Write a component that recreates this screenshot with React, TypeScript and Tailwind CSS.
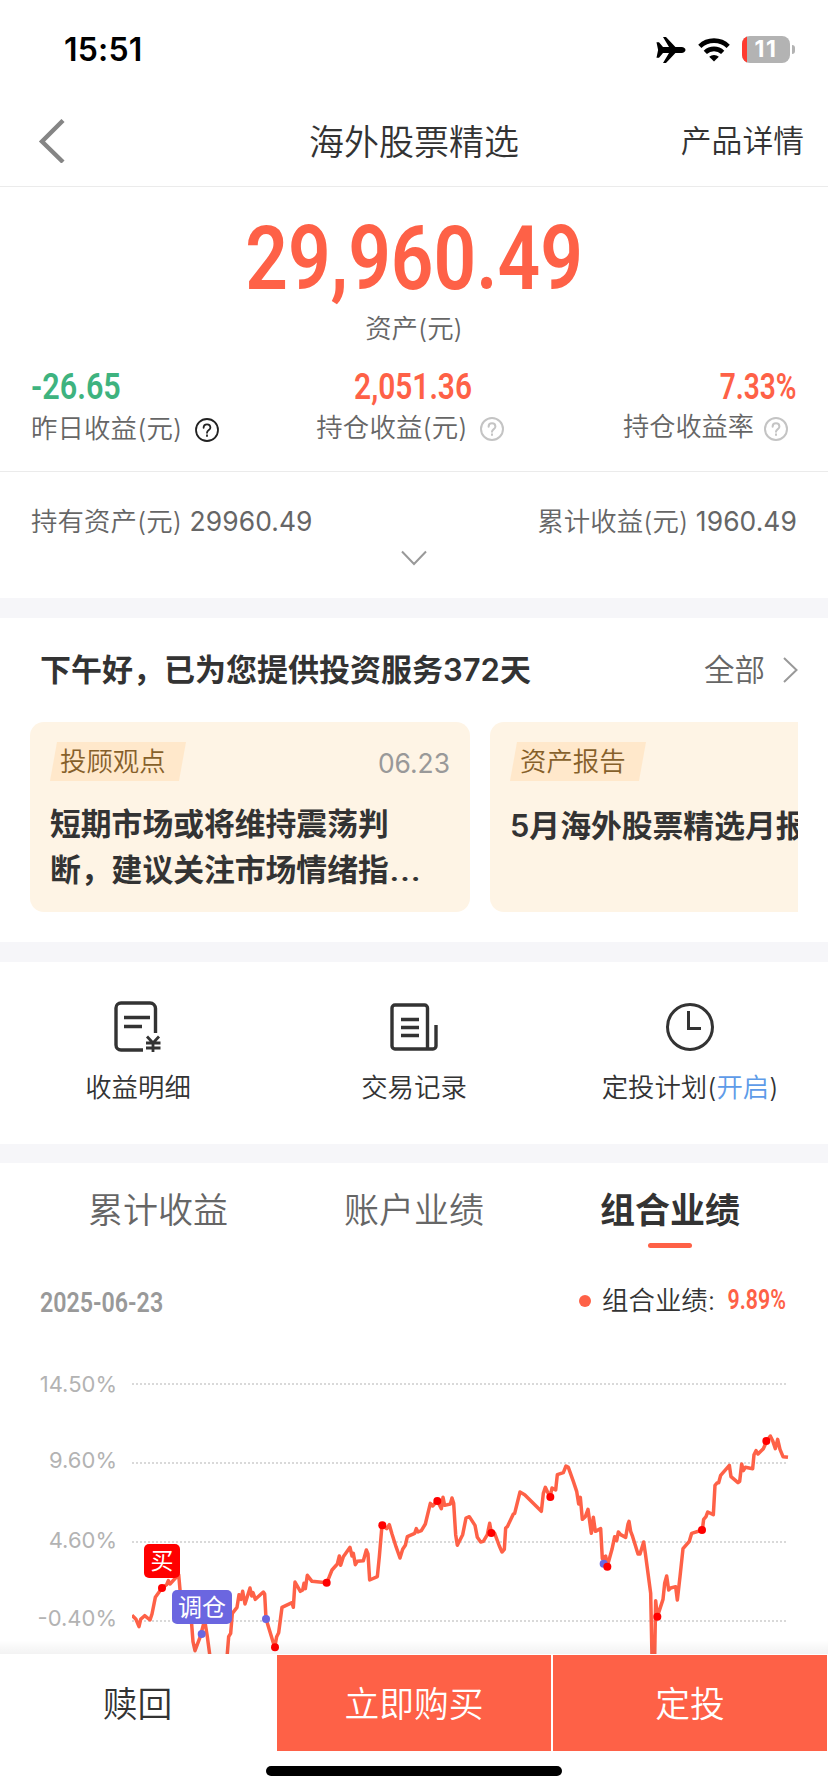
import React from 'react';

const CJK = "font-['Inter','Noto_Sans_CJK_SC',sans-serif]";
const DIN = "font-['Roboto',sans-serif] font-semibold inline-block whitespace-nowrap";

function Help({ dark = false }: { dark?: boolean }) {
  return (
    <svg width="26" height="26" viewBox="0 0 26 26" fill="none" stroke={dark ? '#222' : '#c4c4c4'} strokeWidth={dark ? 1.8 : 2}>
      <circle cx="13" cy="13" r="11" />
      <path d="M9.600 10.800c0-4.600 6.800-4.600 6.800 0 0 2.300-3.400 2.300-3.400 5" strokeLinecap="round" />
      <path d="M13 17.600v2.200" />
    </svg>
  );
}

function StatusBar() {
  return (
    <div className="flex h-[96px] items-center justify-between pt-[3px] pl-[64px] pr-[33px]">
      <span className="pt-px text-[32px] leading-none font-semibold tracking-[0.2px] text-black">15:51</span>
      <div className="flex items-center gap-[12px]">
        <svg width="30" height="28" viewBox="0 0 30 28" fill="#000">
          <path d="M0.500 6.200h2.500l4 4.900h6L7 1h3l9.400 10.100h6.200c2.200 0 3.900 1.500 3.900 2.900s-1.700 2.900-3.900 2.900h-6.200L10 27H7l6-10.100H7l-4 4.900H0.500L2.100 14z" />
        </svg>
        <svg width="32" height="25" viewBox="0 0 32 25" fill="none" stroke="#000" strokeWidth="4.600">
          <path d="M1.800 9.300a20.500 20.500 0 0 1 28.400 0" />
          <path d="M7.300 15.400a12.500 12.500 0 0 1 17.400 0" />
          <path d="M16 24.500l-4.800-4.700a7 7 0 0 1 9.600 0z" fill="#000" stroke="none" />
        </svg>
        <div className="flex items-center">
          <div className="flex h-[27px] w-[48px] items-center overflow-hidden rounded-[8px] bg-[#b3b3b3]">
            <div className="h-full w-[5px] bg-[#ff3b30]" />
            <span className="flex-1 pr-[5px] text-center text-[23px] leading-none font-bold tracking-[1.5px] text-white">11</span>
          </div>
          <div className="ml-[2px] h-[9px] w-[3px] rounded-r-full bg-[#b3b3b3]" />
        </div>
      </div>
    </div>
  );
}

function Tag({ children }: { children: React.ReactNode }) {
  return (
    <div className="flex h-[39px] w-[136px] items-center bg-[#ffe8cb] pl-[10px] text-[26.4px] leading-none text-[#86602a] [clip-path:polygon(7px_0,100%_0,calc(100%-7px)_100%,0_100%)]">
      <span>{children}</span>
    </div>
  );
}

const LINE =
  '396,1066 408,1078 417,1100 422,1078 434,1067 450,1080 456,1062 466,1012 486,984 500,974 505,962 510,972 536,944 541,1000 560,1060 574,1080 579,1145 585,1172 600,1132 614,1080 622,1130 630,1190 650,1300 672,1290 682,1180 686,1130 692,1120 697,1060 711,1042 717,1004 723,1018 728,994 735,1032 750,984 755,1008 759,998 766,1018 790,996 794,1002 798,1076 824,1162 830,1130 836,1118 846,1042 876,1028 880,1042 885,966 901,994 908,990 912,970 916,986 922,946 936,964 980,968 988,950 996,930 1012,912 1018,888 1022,916 1030,890 1050,862 1056,888 1060,880 1066,914 1072,904 1090,902 1099,870 1104,882 1109,960 1132,950 1138,890 1146,796 1160,806 1168,794 1176,822 1188,860 1200,894 1208,868 1216,856 1222,830 1244,820 1249,806 1254,816 1264,812 1276,792 1291,730 1298,738 1312,722 1324,746 1329,712 1334,736 1351,732 1356,714 1361,730 1367,824 1372,856 1388,824 1398,774 1408,770 1425,796 1432,832 1442,846 1450,844 1462,824 1469,790 1474,818 1484,820 1498,858 1506,876 1513,868 1517,804 1522,800 1540,762 1544,760 1560,696 1574,704 1624,754 1630,700 1636,682 1650,712 1656,684 1667,690 1672,644 1690,638 1698,618 1705,622 1720,664 1730,694 1736,732 1741,712 1747,778 1756,770 1764,748 1774,820 1780,772 1786,814 1802,806 1807,896 1817,888 1822,918 1836,868 1844,830 1850,842 1855,816 1862,824 1877,832 1884,792 1887,784 1892,814 1898,830 1914,882 1920,882 1931,846 1936,880 1952,1000 1956,1190 1964,1190 1967,1022 1972,1070 1989,1018 1994,970 2000,948 2006,990 2012,984 2027,980 2032,1020 2040,950 2049,866 2068,844 2075,820 2107,810 2111,778 2118,770 2123,756 2140,764 2145,676 2152,668 2156,668 2162,646 2188,616 2193,650 2214,668 2219,664 2225,612 2230,632 2236,622 2258,626 2262,584 2268,572 2274,582 2290,566 2300,544 2311,528 2318,542 2326,566 2333,538 2340,568 2349,590 2364,592';

const REDS: [number, number][] = [[486, 984], [825, 1162], [980, 968], [1147, 796], [1312, 723], [1474, 819], [1651, 711], [1822, 920], [1972, 1070], [2106, 810], [2299, 543]];
const BLUES: [number, number][] = [[605, 1122], [798, 1077], [1811, 911]];

function Chart() {
  return (
    <div className="relative flex h-[318px] overflow-hidden">
      <div className="relative w-[117px] text-right text-[22px] leading-none font-normal text-[#b3b3b3]">
        <div className="absolute top-[37px] right-0">14.50%</div>
        <div className="absolute top-[113px] right-0">9.60%</div>
        <div className="absolute top-[193px] right-0">4.60%</div>
        <div className="absolute top-[271px] right-0">-0.40%</div>
      </div>
      <svg className="ml-[15px]" width="660" height="318" viewBox="396 228 1980 954">
        {[372, 609, 846, 1083].map((y) => (
          <line key={y} x1="396" x2="2360" y1={y} y2={y} stroke="#d9d9d9" strokeWidth="6" strokeDasharray="6 6" />
        ))}
        <polyline points={LINE} fill="none" stroke="#fe6147" strokeWidth="10.500" strokeLinejoin="round" />
        {BLUES.map(([x, y]) => (
          <circle key={x} cx={x} cy={y} r="12" fill="#6b66e0" />
        ))}
        {REDS.map(([x, y]) => (
          <circle key={x} cx={x} cy={y} r="12" fill="#ff0000" />
        ))}
      </svg>
      <div className="absolute top-[208px] left-[144px] flex h-[34px] w-[36px] items-center justify-center rounded-[5px] bg-[#ff0000] text-[23px] leading-none font-normal text-white">
        <span>买</span>
      </div>
      <div className="absolute top-[254px] left-[172px] flex h-[34px] w-[60px] items-center justify-center rounded-[5px] bg-[#6b66e0] pt-px text-[24px] leading-none font-normal text-white">
        <span>调仓</span>
      </div>
      <div className="absolute bottom-0 left-0 h-[14px] w-full bg-gradient-to-b from-transparent to-black/5" />
    </div>
  );
}

export default function App() {
  return (
    <div className={`${CJK} flex h-[1792px] w-[828px] flex-col overflow-hidden bg-white font-[350] text-[#333]`}>
      <StatusBar />
      <header className="grid h-[91px] grid-cols-[210px_1fr_224px] items-center border-b border-[#ebebeb] pr-[24px] pl-[38px]">
        <svg width="28" height="44" viewBox="0 0 28 44" fill="none" stroke="#858585" strokeWidth="4.400">
          <path d="M25 1.500L4 22.500L25 43" />
        </svg>
        <h1 className="pt-[2px] text-center text-[35px] leading-none">海外股票精选</h1>
        <span className="justify-self-end text-[30.8px] leading-none">产品详情</span>
      </header>

      <section className="h-[285px] border-b border-[#ebebeb]">
        <div className="flex h-[124px] flex-col items-center pt-[27px]">
          <span className={`${DIN} origin-center scale-x-[0.84] text-[89px] leading-[90px] text-[#fe6147]`}>29,960.49</span>
        </div>
        <div className="flex h-[34px] items-center justify-center text-[26.4px] leading-none text-[#666]">资产(元)</div>
        <div className="flex justify-between px-[31px] pt-[22px]">
          <div className="flex w-[190px] flex-col items-start">
            <span className={`${DIN} origin-left scale-x-[0.85] text-[36px] leading-[40px] text-[#3eb37f]`}>-26.65</span>
            <div className="mt-[3px] flex h-[36px] items-center gap-[12px] text-[26.4px] leading-none text-[#666]"><span className="tracking-[0.15px]">昨日收益(元)</span><span className="pt-[4px]"><Help dark /></span></div>
          </div>
          <div className="-ml-[7px] flex flex-col items-center">
            <span className={`${DIN} ml-[6px] origin-center scale-x-[0.83] text-[36px] leading-[40px] text-[#fe6147]`}>2,051.36</span>
            <div className="mt-[2px] flex h-[36px] items-center gap-[11px] text-[26.4px] leading-none text-[#666]"><span className="tracking-[0.15px]">持仓收益(元)</span><span className="pt-[3px]"><Help /></span></div>
          </div>
          <div className="flex w-[190px] flex-col items-end">
            <span className={`${DIN} origin-right scale-x-[0.78] text-[36px] leading-[40px] text-[#fe6147]`}>7.33%</span>
            <div className="mt-[2px] flex h-[36px] items-center gap-[9px] pr-[8px] text-[26.2px] leading-none text-[#666]"><span>持仓收益率</span><span className="pt-[3px]"><Help /></span></div>
          </div>
        </div>
      </section>

      <section className="h-[126px] px-[31px] pt-[31px] text-[26.4px] text-[#666]">
        <div className="flex h-[36px] items-center justify-between leading-none tracking-[0.1px]">
          <span>持有资产(元) <span className="font-normal">29960.49</span></span>
          <span>累计收益(元) <span className="font-normal">1960.49</span></span>
        </div>
        <svg className="mx-auto mt-[11px]" width="26" height="16" viewBox="0 0 26 16" fill="none" stroke="#999" strokeWidth="2">
          <path d="M1 1.500L13 14L25 1.500" />
        </svg>
      </section>
      <div className="h-[20px] bg-[#f6f6f9]" />

      <section className="h-[324px] pl-[30px] pr-[30px]">
        <div className="flex h-[104px] items-center justify-between pl-[10px]">
          <h2 className="pb-[2px] text-[31px] leading-none font-semibold">下午好，已为您提供投资服务372天</h2>
          <div className="flex items-center gap-[18px] text-[30.5px] leading-none text-[#666]">
            <span>全部</span>
            <svg width="15" height="26" viewBox="0 0 15 26" fill="none" stroke="#999" strokeWidth="2">
              <path d="M1 1L13.500 13L1 25" />
            </svg>
          </div>
        </div>
        <div className="flex gap-[20px] overflow-hidden">
          <article className="h-[190px] w-[440px] shrink-0 rounded-[14px] bg-[#fef4e5] px-[20px] pt-[20px]">
            <div className="flex items-center justify-between">
              <Tag>投顾观点</Tag>
              <span className="pt-[3px] text-[26.4px] leading-none font-normal text-[#999]">06.23</span>
            </div>
            <p className="mt-[20px] text-[30.8px] leading-[46px] font-semibold whitespace-nowrap">短期市场或将维持震荡判<br />断，建议关注市场情绪指<span className="inline-block origin-left scale-x-[1.2] font-normal">…</span></p>
          </article>
          <article className="h-[190px] w-[440px] shrink-0 rounded-[14px] bg-[#fef4e5] px-[20px] pt-[20px]">
            <Tag>资产报告</Tag>
            <p className="mt-[22px] text-[30.8px] leading-[46px] font-semibold whitespace-nowrap">5月海外股票精选月报</p>
          </article>
        </div>
      </section>
      <div className="h-[20px] bg-[#f6f6f9]" />

      <section className="grid h-[182px] grid-cols-3 pt-[38px] text-[26.4px] leading-none">
        <div className="flex flex-col items-center gap-[22px]">
          <svg width="50" height="52" viewBox="0 0 50 52" fill="none" stroke="#333" strokeWidth="3.400">
            <path d="M42.500 33V8.500a5.500 5.500 0 0 0-5.500-5.500H8a5 5 0 0 0-5 5v37a5 5 0 0 0 5 5h22M11 17.500h26M11 26.500h18" />
            <path d="M34 36.500l6 6.500 6-6.500M40 43v9M33 43h14.500M33 48h14.500" strokeWidth="2.800" />
          </svg>
          <span>收益明细</span>
        </div>
        <div className="flex flex-col items-center gap-[22px]">
          <svg width="50" height="52" viewBox="0 0 50 52" fill="none" stroke="#333" strokeWidth="3.400">
            <path d="M38.500 49V8a3 3 0 0 0-3-3H6a3 3 0 0 0-3 3v38a3 3 0 0 0 3 3h38a3 3 0 0 0 3-3V25M12 19.500h18M12 27.500h18M12 35.500h18" />
          </svg>
          <span>交易记录</span>
        </div>
        <div className="flex flex-col items-center gap-[22px]">
          <svg width="50" height="52" viewBox="0 0 50 52" fill="none" stroke="#333" strokeWidth="3">
            <circle cx="25" cy="27" r="22.500" />
            <path d="M23.500 11v17.500H36" />
          </svg>
          <span>定投计划(<span className="text-[#5e9be8]">开启</span>)</span>
        </div>
      </section>
      <div className="h-[19px] bg-[#f6f6f9]" />

      <section className="h-[491px]">
        <nav className="grid h-[92px] grid-cols-3 px-[30px] pt-[25px] text-[35px] leading-[44px] text-[#666]">
          <span className="text-center">累计收益</span>
          <span className="text-center">账户业绩</span>
          <span className="flex flex-col items-center font-bold text-[#333]">
            组合业绩
            <span className="mt-[11px] h-[5px] w-[44px] rounded-full bg-[#fe6147]" />
          </span>
        </nav>
        <div className="flex h-[81px] items-start justify-between pt-[31px] pr-[42px] pl-[40px]">
          <span className={`${DIN} origin-left scale-x-[0.86] text-[27px] leading-[34px] text-[#999]`}>2025-06-23</span>
          <div className="flex items-center text-[26.4px] leading-[32px]">
            <span className="mr-[11px] h-[12px] w-[12px] rounded-full bg-[#fe6147]" />
            <span className="-mt-[2px]">组合业绩:</span>
            <span className={`${DIN} -mt-[2px] -ml-[3px] origin-right scale-x-[0.79] text-[27px] text-[#fe6147]`}>9.89%</span>
          </div>
        </div>
        <Chart />
      </section>

      <footer className="flex h-[138px] shrink-0 flex-col bg-white">
        <div className="flex h-[97px] gap-[2px] pt-px pr-px text-[34.8px] leading-none">
          <button className="w-[275px] pt-[2px]">赎回</button>
          <button className="flex-1 bg-[#fe6147] pt-[2px] text-white">立即购买</button>
          <button className="flex-1 bg-[#fe6147] pt-[2px] text-white">定投</button>
        </div>
        <div className="mx-auto mt-[15px] h-[10px] w-[296px] rounded-full bg-black" />
      </footer>
    </div>
  );
}
